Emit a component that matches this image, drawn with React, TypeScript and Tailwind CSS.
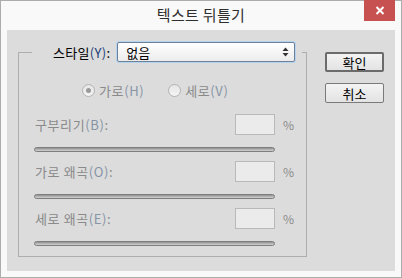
import React from "react";

const font = "font-['Malgun_Gothic','Noto_Sans_CJK_KR',sans-serif]";

function Slider() {
  return (
    <div className="mt-[12px] h-[5px] w-[241px] rounded-full border border-[#7e7e7e] bg-[linear-gradient(#8f8f8f,#b9b9b9_60%,#d2d2d2)]" />
  );
}

interface RowProps {
  label: string;
  hotkey: string;
  first?: boolean;
}

function Row({ label, hotkey, first }: RowProps) {
  return (
    <div className={first ? "mt-[16px]" : "mt-[9px]"}>
      <div className="flex items-center">
        <div className="flex w-[241px] items-center justify-between">
          <span className="pl-px text-[13px] leading-none tracking-[0.6px] text-[#8a8a8a]">
            {label}
            <span className="text-[#8794a6]">({hotkey})</span>:
          </span>
          <div className="h-[21px] w-[40px] border border-[#b9b9b9] bg-[#ebebeb]" />
        </div>
        <span className="ml-[8px] text-[12px] leading-none text-[#8a8a8a]">%</span>
      </div>
      <Slider />
    </div>
  );
}

function Radio({ checked, label, hotkey }: { checked?: boolean; label: string; hotkey: string }) {
  return (
    <div className="flex items-center">
      <div className="flex h-[13px] w-[13px] items-center justify-center rounded-full border border-[#b3b3b3] bg-[linear-gradient(#e6e6e6,#f4f4f4)]">
        {checked && <div className="h-[5px] w-[5px] rounded-full bg-[#9a9a9a]" />}
      </div>
      <span className="ml-[4px] text-[13px] leading-none tracking-[0.6px] text-[#8a8a8a]">
        {label}
        <span className="text-[#8794a6]">({hotkey})</span>
      </span>
    </div>
  );
}

function Button({ label, isDefault }: { label: string; isDefault?: boolean }) {
  return (
    <div
      className={
        "flex h-[20px] w-[59px] items-center justify-center rounded-[2px] bg-[linear-gradient(#f3f3f3,#e3e3e3)] text-[13px] leading-none text-black " +
        (isDefault ? "border-2 border-[#6b6b6b]" : "border border-[#7a7a7a]")
      }
    >
      {label}
    </div>
  );
}

export default function App() {
  return (
    <div className={`flex h-[278px] w-[402px] flex-col border border-[#acacac] bg-[#f9f9f9] ${font}`}>
      <div className="relative flex h-[29px] shrink-0 items-center justify-center">
        <span className="pb-[2px] text-[15px] leading-none tracking-[0.3px] text-[#2e2e2e]">텍스트 뒤틀기</span>
        <div className="absolute right-[6px] top-[-1px] flex h-[21px] w-[31px] items-center justify-center bg-[#c75050]">
          <svg width="10" height="9" viewBox="0 0 10 9">
            <path d="M1.5 1 L8.5 8 M8.5 1 L1.5 8" stroke="#fff" strokeWidth="2" />
          </svg>
        </div>
      </div>

      <div className="mx-[6px] mb-[6px] flex flex-1 items-start bg-[#dcdcdc] pl-[11px] pt-[12px]">
        <fieldset className="m-0 h-[215px] w-[289px] min-w-0 border border-[#aeaeae] p-0">
          <legend className="ml-[13px] flex h-[20px] items-center pl-[21px] pr-[7px]">
            <span className="text-[13px] leading-none tracking-[0.3px] text-black">
              스타일<span className="text-[#1f3f7a]">(Y)</span>:
            </span>
            <div className="ml-[7px] flex h-[20px] w-[178px] items-center justify-between rounded-[2px] border border-[#6f8196] bg-[linear-gradient(#ffffff,#ececec)] pl-[8px] pr-[5px] shadow-[0_0_0_1px_#b4d3f1]">
              <span className="text-[13px] leading-none text-black">없음</span>
              <svg width="7" height="10" viewBox="0 0 7 10">
                <path d="M3.5 0.5 L6.5 4 L0.5 4 Z" fill="#333" />
                <path d="M0.5 6 L6.5 6 L3.5 9.5 Z" fill="#333" />
              </svg>
            </div>
          </legend>

          <div className="pl-[15px]">
            <div className="mt-[20px] flex h-[16px] items-center gap-[24px] pl-[48px]">
              <Radio checked label="가로" hotkey="H" />
              <Radio label="세로" hotkey="V" />
            </div>
            <Row first label="구부리기" hotkey="B" />
            <Row label="가로 왜곡" hotkey="O" />
            <Row label="세로 왜곡" hotkey="E" />
          </div>
        </fieldset>

        <div className="ml-[18px] flex flex-col gap-[11px] pt-[10px]">
          <Button isDefault label="확인" />
          <Button label="취소" />
        </div>
      </div>
    </div>
  );
}
